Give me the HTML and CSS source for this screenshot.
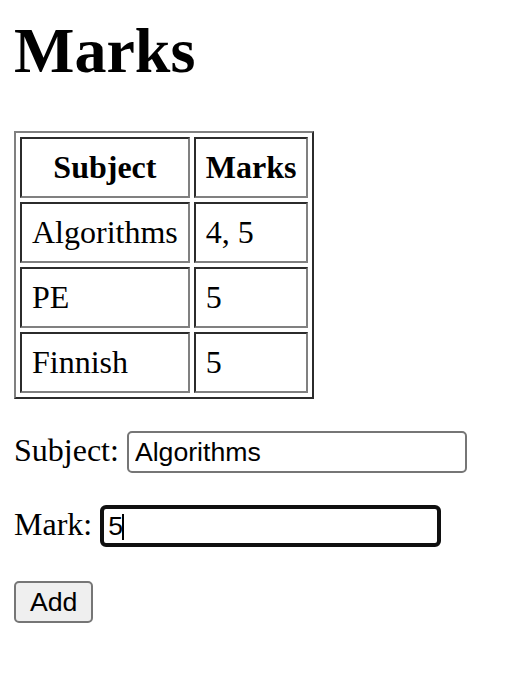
FILE: index.html
```html
<!DOCTYPE html>
<html lang="en">
<head>
<meta charset="utf-8">
<title>Marks</title>
<link rel="stylesheet" href="styles.css">
</head>
<body>
<h1 class="title">Marks</h1>
<table class="marks">
  <tr><th>Subject</th><th>Marks</th></tr>
  <tr><td>Algorithms</td><td>4, 5</td></tr>
  <tr><td>PE</td><td>5</td></tr>
  <tr><td>Finnish</td><td>5</td></tr>
</table>
<p class="row">Subject: <input class="field subject" type="text" value="Algorithms"></p>
<p class="row">Mark: <span class="field-wrap"><input class="field focused" type="text" value="5"><span class="caret"></span></span></p>
<p class="row btn-row"><button class="btn" type="button">Add</button></p>
</body>
</html>
```
FILE: styles.css
```css
html, body {
  background: #ffffff;
}
body {
  margin: 14px;
  font-family: "Liberation Serif", "Times New Roman", serif;
  font-size: 32px;
  color: #000000;
}
.title {
  font-size: 64px;
  font-weight: bold;
  margin: 0 0 43px 0;
  line-height: normal;
}
.marks {
  border-collapse: separate;
  border-spacing: 4px;
  border-style: solid;
  border-width: 2px;
  border-color: #808080 #2b2b2b #2b2b2b #808080;
}
.marks th,
.marks td {
  border-style: solid;
  border-width: 2px;
  border-color: #2b2b2b #808080 #808080 #2b2b2b;
  padding: 10px;
  font-size: 32px;
}
.marks td {
  text-align: left;
}
.marks th {
  text-align: center;
  font-weight: bold;
}
.row {
  margin: 32px 0;
}
.btn-row {
  margin-top: 34px;
}
.field-wrap {
  position: relative;
  display: inline-block;
}
.caret {
  position: absolute;
  left: 22px;
  top: 9px;
  width: 2px;
  height: 26px;
  background: #000000;
}
.field {
  box-sizing: border-box;
  font-family: "Liberation Sans", Arial, sans-serif;
  font-size: 26.67px;
  color: #000000;
  height: 42px;
  width: 340px;
  padding: 0 6px;
  border: 2px solid #767676;
  border-radius: 5px;
  background: #ffffff;
  vertical-align: baseline;
  outline: none;
}
.field.focused {
  width: 341px;
  border: 4px solid #101010;
  border-radius: 6px;
  padding: 0 4px;
}
.btn {
  box-sizing: border-box;
  font-family: "Liberation Sans", Arial, sans-serif;
  font-size: 26.67px;
  color: #000000;
  height: 42px;
  padding: 0 14px;
  border: 2px solid #767676;
  border-radius: 5px;
  background: #efefef;
}
```
